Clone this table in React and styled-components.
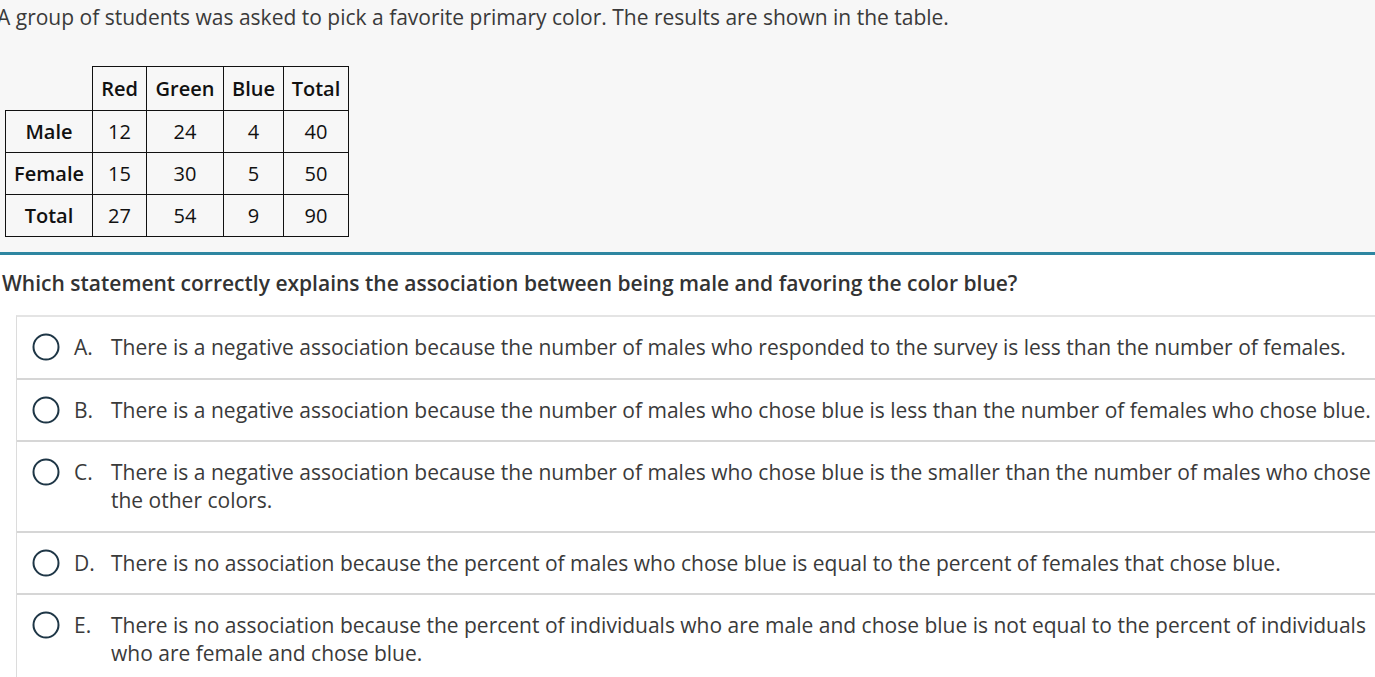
import React from "react"
import styled, { createGlobalStyle } from "styled-components"

const GlobalStyle = createGlobalStyle`
	html, body {
		margin: 0;
		padding: 0;
		background: #fff;
		overflow: hidden;
	}
	body {
		font-family: "Open Sans", "Noto Sans", sans-serif;
		color: #333;
	}
`

const rows = [
	{ label: "Male", values: [12, 24, 4, 40] },
	{ label: "Female", values: [15, 30, 5, 50] },
	{ label: "Total", values: [27, 54, 9, 90] },
]

const options = [
	{ letter: "A.", text: "There is a negative association because the number of males who responded to the survey is less than the number of females." },
	{ letter: "B.", text: "There is a negative association because the number of males who chose blue is less than the number of females who chose blue." },
	{ letter: "C.", text: "There is a negative association because the number of males who chose blue is the smaller than the number of males who chose the other colors." },
	{ letter: "D.", text: "There is no association because the percent of males who chose blue is equal to the percent of females that chose blue." },
	{ letter: "E.", text: "There is no association because the percent of individuals who are male and chose blue is not equal to the percent of individuals who are female and chose blue." },
]

function Radio() {
	return (
		<RadioIcon width="28" height="28" viewBox="0 0 28 28">
			<circle cx="14" cy="14" r="12.5" fill="#fff" stroke="#1e3646" strokeWidth="2" />
		</RadioIcon>
	)
}

export default function App() {
	return (
		<>
			<GlobalStyle />
			<Stimulus>
				<Intro>A group of students was asked to pick a favorite primary color. The results are shown in the table.</Intro>
				<Table>
					<colgroup>
						<col style={{ width: 87 }} />
						<col style={{ width: 54 }} />
						<col style={{ width: 77 }} />
						<col style={{ width: 60 }} />
						<col style={{ width: 65 }} />
					</colgroup>
					<thead>
						<tr>
							<Blank />
							<Head>Red</Head>
							<Head>Green</Head>
							<Head>Blue</Head>
							<Head>Total</Head>
						</tr>
					</thead>
					<tbody>
						{rows.map((r) => (
							<tr key={r.label}>
								<Head>{r.label}</Head>
								{r.values.map((v, i) => (
									<Cell key={i}>{v}</Cell>
								))}
							</tr>
						))}
					</tbody>
				</Table>
			</Stimulus>
			<Question>Which statement correctly explains the association between being male and favoring the color blue?</Question>
			<Choices>
				{options.map((o) => (
					<Choice key={o.letter}>
						<Radio />
						<Letter>{o.letter}</Letter>
						<ChoiceText>{o.text}</ChoiceText>
					</Choice>
				))}
			</Choices>
		</>
	)
}

const Stimulus = styled.div`
	background: #f7f7f7;
	height: 252px;
	border-bottom: 3px solid #2e86a1;
	box-sizing: content-box;
	padding-left: 5px;
`

const Intro = styled.p`
	margin: 0 0 0 -8px;
	padding-top: 3px;
	font-size: 21px;
	line-height: 28px;
	color: #3a3a3a;
	white-space: nowrap;
`

const Table = styled.table`
	margin-top: 35px;
	border-collapse: collapse;
	table-layout: fixed;
	width: 343px;
	color: #111;
	font-size: 20px;
`

const Blank = styled.th`
	border: none;
	height: 41px;
`

const Head = styled.th`
	border: 1px solid #111;
	height: 41px;
	padding: 0;
	font-weight: 600;
	text-align: center;
`

const Cell = styled.td`
	border: 1px solid #111;
	height: 41px;
	padding: 0;
	text-align: center;
	font-weight: 400;
`

const Question = styled.p`
	margin: 0;
	padding: 14px 0 0 2px;
	font-size: 21px;
	line-height: 28px;
	font-weight: 600;
	color: #333;
	white-space: nowrap;
`

const Choices = styled.div`
	margin: 18px 0 0 16px;
	width: 1380px;
	border-top: 2px solid #e4e4e4;
	border-left: 1px solid #dcdcdc;
`

const Choice = styled.div`
	display: flex;
	align-items: flex-start;
	padding: 16px 6px 16.5px 15px;
	border-bottom: 2px solid #d6d6d6;
	font-size: 21px;
	line-height: 28px;
	color: #3a3a3a;
`

const RadioIcon = styled.svg`
	flex: none;
	display: block;
	margin-right: 14px;
`

const Letter = styled.span`
	flex: none;
	width: 37px;
`

const ChoiceText = styled.span`
	flex: 1;
`
